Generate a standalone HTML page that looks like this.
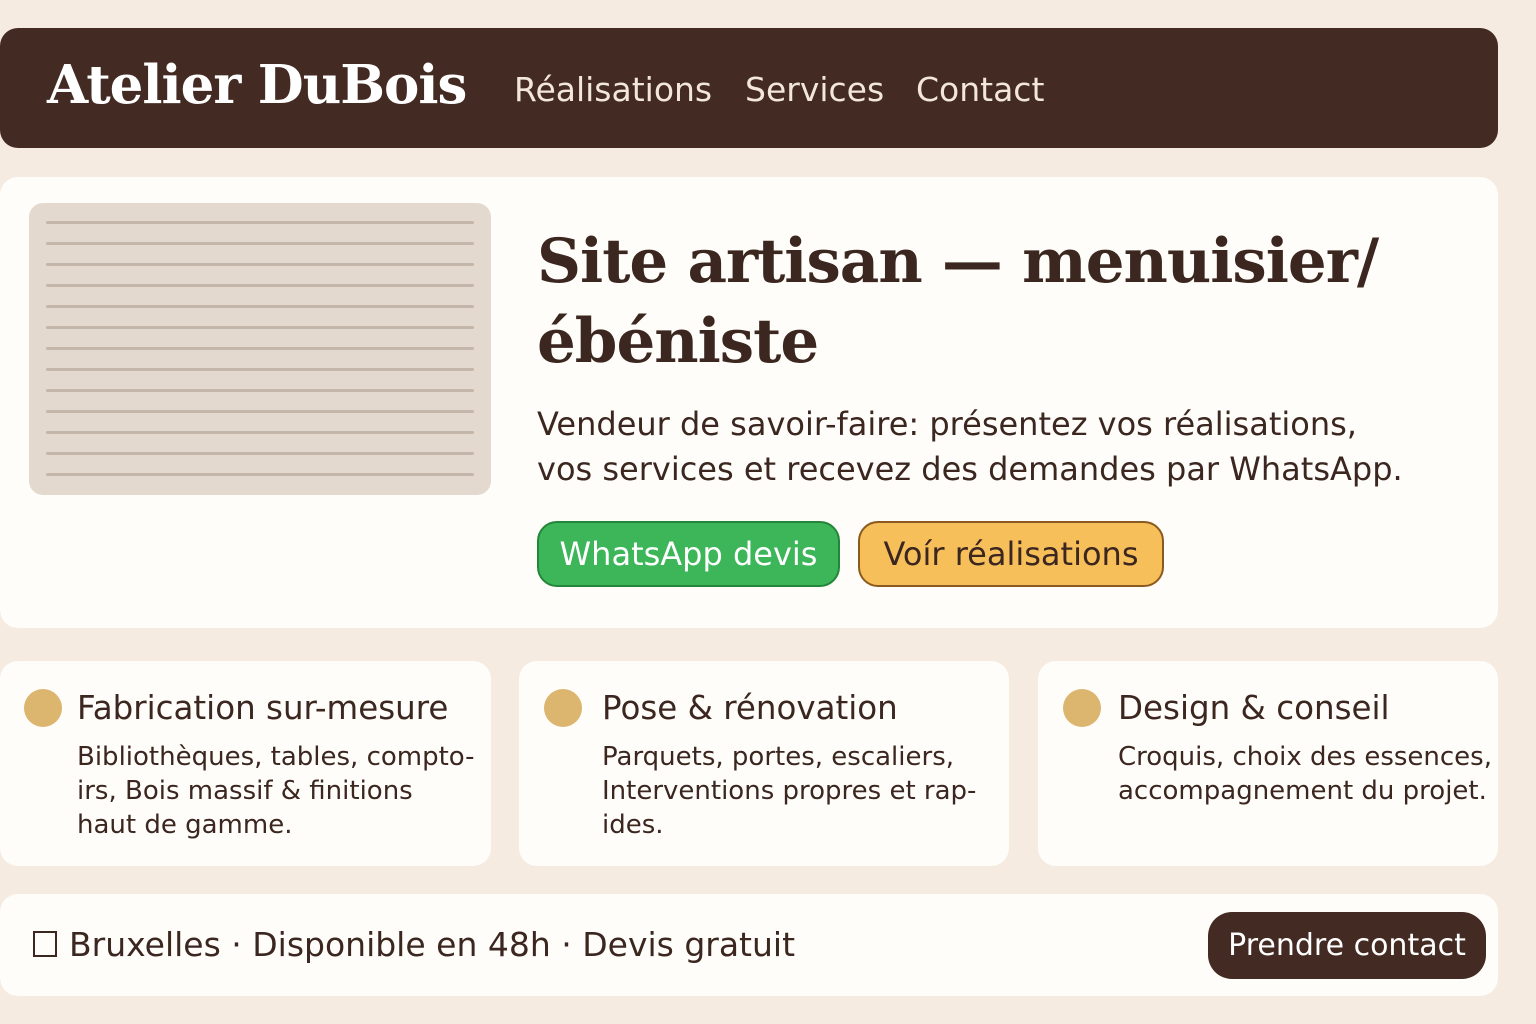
<!DOCTYPE html>
<html><head><meta charset="utf-8"><style>
*{margin:0;padding:0;box-sizing:border-box}
body{width:1536px;height:1024px;background:#f5ebe1;font-family:"DejaVu Sans","Liberation Sans",sans-serif;color:#3b2620;position:relative;overflow:hidden}
.abs{position:absolute}
.nav{left:0;top:28px;width:1498px;height:120px;background:#432a22;border-radius:18px}
.logo{left:47px;top:54px;font-family:"DejaVu Serif","Liberation Serif",serif;font-weight:bold;font-size:53px;color:#fff;letter-spacing:-1px}
.nl{top:70px;font-size:33px;color:#f3e6da}
.card{background:#fffdf9;border-radius:18px}
.img{left:29px;top:203px;width:462px;height:292px;background:#e3d9ce;border-radius:14px}
.ln{position:absolute;left:17px;width:428px;height:3px;background:#c4b6a8;border-radius:2px}
h1{left:537px;top:222px;font-family:"DejaVu Serif","Liberation Serif",serif;font-weight:bold;font-size:61px;line-height:80px;letter-spacing:-1px;color:#3b2620}
.sub{left:537px;top:402px;font-size:32px;line-height:45px}
.btn{top:521px;height:66px;border-radius:20px;font-size:32px;display:flex;align-items:center;justify-content:center}
.dot{width:38px;height:38px;border-radius:50%;background:#dcb56f}
.ct{font-size:32.5px;top:689px}
.cb{font-size:26px;line-height:34px;top:740px}
</style></head><body>
<div class="abs nav"></div>
<div class="abs logo">Atelier DuBois</div>
<div class="abs nl" style="left:514px">Réalisations</div>
<div class="abs nl" style="left:745px">Services</div>
<div class="abs nl" style="left:916px">Contact</div>

<div class="abs card" style="left:0;top:177px;width:1498px;height:451px"></div>
<div class="abs img">
<div class="ln" style="top:18px"></div><div class="ln" style="top:39px"></div><div class="ln" style="top:60px"></div><div class="ln" style="top:81px"></div><div class="ln" style="top:102px"></div><div class="ln" style="top:123px"></div><div class="ln" style="top:144px"></div><div class="ln" style="top:165px"></div><div class="ln" style="top:186px"></div><div class="ln" style="top:207px"></div><div class="ln" style="top:228px"></div><div class="ln" style="top:249px"></div><div class="ln" style="top:270px"></div>
</div>
<h1 class="abs">Site artisan — menuisier/<br>ébéniste</h1>
<div class="abs sub">Vendeur de savoir-faire: présentez vos réalisations,<br>vos services et recevez des demandes par WhatsApp.</div>
<div class="abs btn" style="left:537px;width:303px;background:#3db65a;border:2px solid #23863a;color:#fff">WhatsApp devis</div>
<div class="abs btn" style="left:858px;width:306px;background:#f6bf5a;border:2px solid #8a5a1e;color:#3b2620">Voír réalisations</div>

<div class="abs card" style="left:0;top:661px;width:491px;height:205px"></div>
<div class="abs card" style="left:519px;top:661px;width:490px;height:205px"></div>
<div class="abs card" style="left:1038px;top:661px;width:460px;height:205px"></div>
<div class="abs dot" style="left:24px;top:689px"></div>
<div class="abs dot" style="left:544px;top:689px"></div>
<div class="abs dot" style="left:1063px;top:689px"></div>
<div class="abs ct" style="left:77px">Fabrication sur-mesure</div>
<div class="abs ct" style="left:602px">Pose &amp; rénovation</div>
<div class="abs ct" style="left:1118px">Design &amp; conseil</div>
<div class="abs cb" style="left:77px">Bibliothèques, tables, compto-<br>irs, Bois massif &amp; finitions<br>haut de gamme.</div>
<div class="abs cb" style="left:602px">Parquets, portes, escaliers,<br>Interventions propres et rap-<br>ides.</div>
<div class="abs cb" style="left:1118px">Croquis, choix des essences,<br>accompagnement du projet.</div>

<div class="abs card" style="left:0;top:894px;width:1498px;height:102px"></div>
<div class="abs" style="left:33px;top:931px;width:24px;height:26px;border:2px solid #3b2620"></div>
<div class="abs" style="left:69px;top:925px;font-size:33px">Bruxelles · Disponible en 48h · Devis gratuit</div>
<div class="abs" style="left:1208px;top:912px;width:278px;height:67px;background:#432a22;border-radius:24px;color:#fff;font-size:30px;display:flex;align-items:center;justify-content:center">Prendre contact</div>
</body></html>
